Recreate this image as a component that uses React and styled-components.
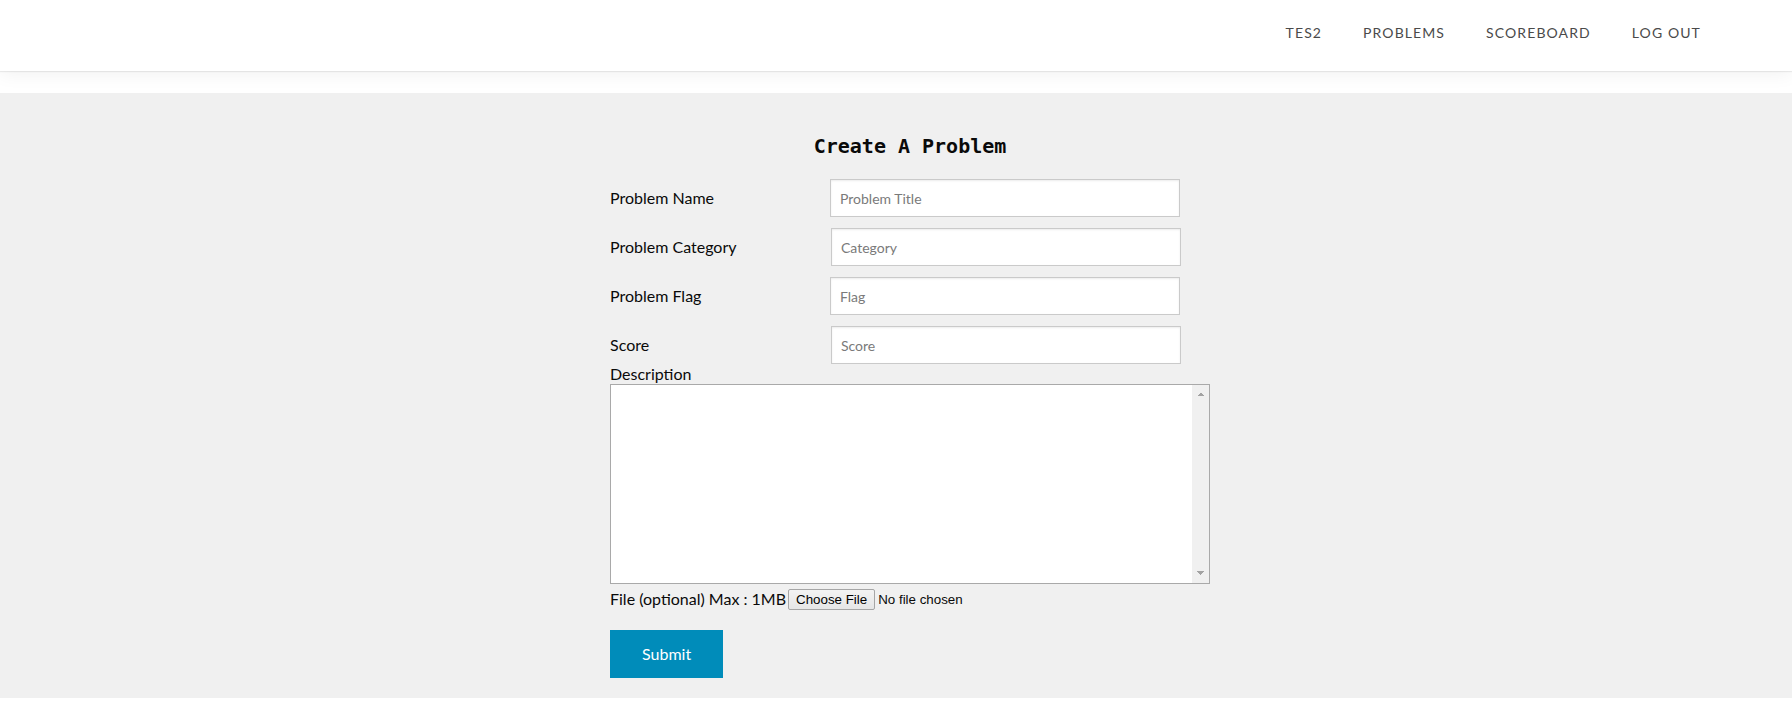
import React from "react";
import styled, { createGlobalStyle } from "styled-components";

const Global = createGlobalStyle`
  html, body { margin: 0; padding: 0; background: #ffffff; }
  body { font-family: Lato, "Open Sans", sans-serif; color: #0a0a0a; }
  * { box-sizing: border-box; }
`;

const Header = styled.header`
  height: 71px;
  background: #ffffff;
  display: flex;
  align-items: center;
  justify-content: flex-end;
  padding: 0 91px 5px 0;
  box-shadow: 0 1px 1px rgba(0, 0, 0, 0.07), 0 3px 18px rgba(0, 0, 0, 0.06);
  position: relative;
  z-index: 1;
`;

const Nav = styled.nav`
  display: flex;
  gap: 41px;
`;

const NavLink = styled.a`
  font-family: Lato, sans-serif;
  font-size: 14px;
  line-height: 18px;
  letter-spacing: 1.1px;
  text-transform: uppercase;
  color: #4a4a4a;
  text-decoration: none;
  cursor: pointer;
`;

const Section = styled.main`
  margin-top: 22px;
  background: #f0f0f0;
  padding: 41px 0 20px;
`;

const Container = styled.div`
  width: 600px;
  margin-left: calc(50% - 286px);
`;

const Title = styled.h2`
  margin: 0 0 21px;
  font-family: "DejaVu Sans Mono", "Liberation Mono", monospace;
  font-weight: bold;
  font-size: 20px;
  line-height: 24px;
  text-align: center;
  color: #0a0a0a;
`;

const Form = styled.form`
  display: flex;
  flex-direction: column;
`;

const Rows = styled.div`
  display: flex;
  flex-direction: column;
  gap: 11px;
`;

const Row = styled.div`
  display: flex;
  align-items: center;
`;

const Label = styled.label`
  width: ${(p) => p.$w || 220}px;
  font-size: 16px;
  line-height: 20px;
  color: #0a0a0a;
`;

const Input = styled.input`
  width: 350px;
  height: 38px;
  padding: 0 9px;
  border: 1px solid #cacaca;
  background: #ffffff;
  box-shadow: inset 0 1px 2px rgba(10, 10, 10, 0.08);
  font-family: Lato, sans-serif;
  font-size: 14px;
  color: #0a0a0a;
  outline: none;
  &::placeholder { color: #7a7a7a; }
`;

const DescLabel = styled.label`
  display: block;
  font-size: 16px;
  line-height: 20px;
  color: #0a0a0a;
`;

const arrow = "#a3a3a3";

const TextArea = styled.textarea`
  display: block;
  width: 600px;
  height: 200px;
  margin: 0;
  padding: 2px 19px 2px 3px;
  border: 1px solid #a9a9a9;
  resize: none;
  overflow-y: auto;
  outline: none;
  font-family: Lato, sans-serif;
  font-size: 14px;
  background-color: #ffffff;
  background-repeat: no-repeat;
  background-image:
    linear-gradient(to top left, ${arrow} 50%, transparent 50%),
    linear-gradient(to top right, ${arrow} 50%, transparent 50%),
    linear-gradient(to bottom left, ${arrow} 50%, transparent 50%),
    linear-gradient(to bottom right, ${arrow} 50%, transparent 50%),
    linear-gradient(#f0f0f0, #f0f0f0);
  background-size: 4px 4px, 4px 4px, 4px 4px, 4px 4px, 17px 100%;
  background-position:
    right 8px top 7px,
    right 4px top 7px,
    right 8px bottom 8px,
    right 4px bottom 8px,
    right 0 top 0;
`;

const FileRow = styled.div`
  display: flex;
  align-items: center;
  height: 30px;
`;

const FileText = styled.span`
  font-size: 16px;
  line-height: 20px;
  margin-right: 2px;
  color: #0a0a0a;
`;

const FileInput = styled.input`
  font-family: "Liberation Sans", Arial, sans-serif;
  font-size: 13.33px;
  color: #0a0a0a;
  &::file-selector-button {
    font-family: "Liberation Sans", Arial, sans-serif;
    font-size: 13.33px;
    height: 21px;
    padding: 0 7px;
    margin-right: 3px;
    border: 1px solid #a6a6a6;
    border-radius: 2px;
    background: linear-gradient(#f3f3f3, #e6e6e6);
    color: #000000;
  }
`;

const Submit = styled.button`
  align-self: flex-start;
  margin-top: 16px;
  padding: 16px 32px;
  border: none;
  background: #008cba;
  color: #ffffff;
  font-family: Lato, sans-serif;
  font-size: 16px;
  line-height: 16px;
  cursor: pointer;
`;

const fields = [
  { label: "Problem Name", placeholder: "Problem Title", shift: 0 },
  { label: "Problem Category", placeholder: "Category", shift: 1 },
  { label: "Problem Flag", placeholder: "Flag", shift: 0 },
  { label: "Score", placeholder: "Score", shift: 1 },
];

export default function App() {
  return (
    <>
      <Global />
      <Header>
        <Nav>
          <NavLink>tes2</NavLink>
          <NavLink>Problems</NavLink>
          <NavLink>Scoreboard</NavLink>
          <NavLink>Log out</NavLink>
        </Nav>
      </Header>
      <Section>
        <Container>
          <Title>Create A Problem</Title>
          <Form onSubmit={(e) => e.preventDefault()}>
            <Rows>
              {fields.map((f) => (
                <Row key={f.label}>
                  <Label $w={220 + f.shift}>{f.label}</Label>
                  <Input type="text" placeholder={f.placeholder} />
                </Row>
              ))}
            </Rows>
            <DescLabel>Description</DescLabel>
            <TextArea />
            <FileRow>
              <FileText>File (optional) Max : 1MB</FileText>
              <FileInput type="file" />
            </FileRow>
            <Submit type="submit">Submit</Submit>
          </Form>
        </Container>
      </Section>
    </>
  );
}
